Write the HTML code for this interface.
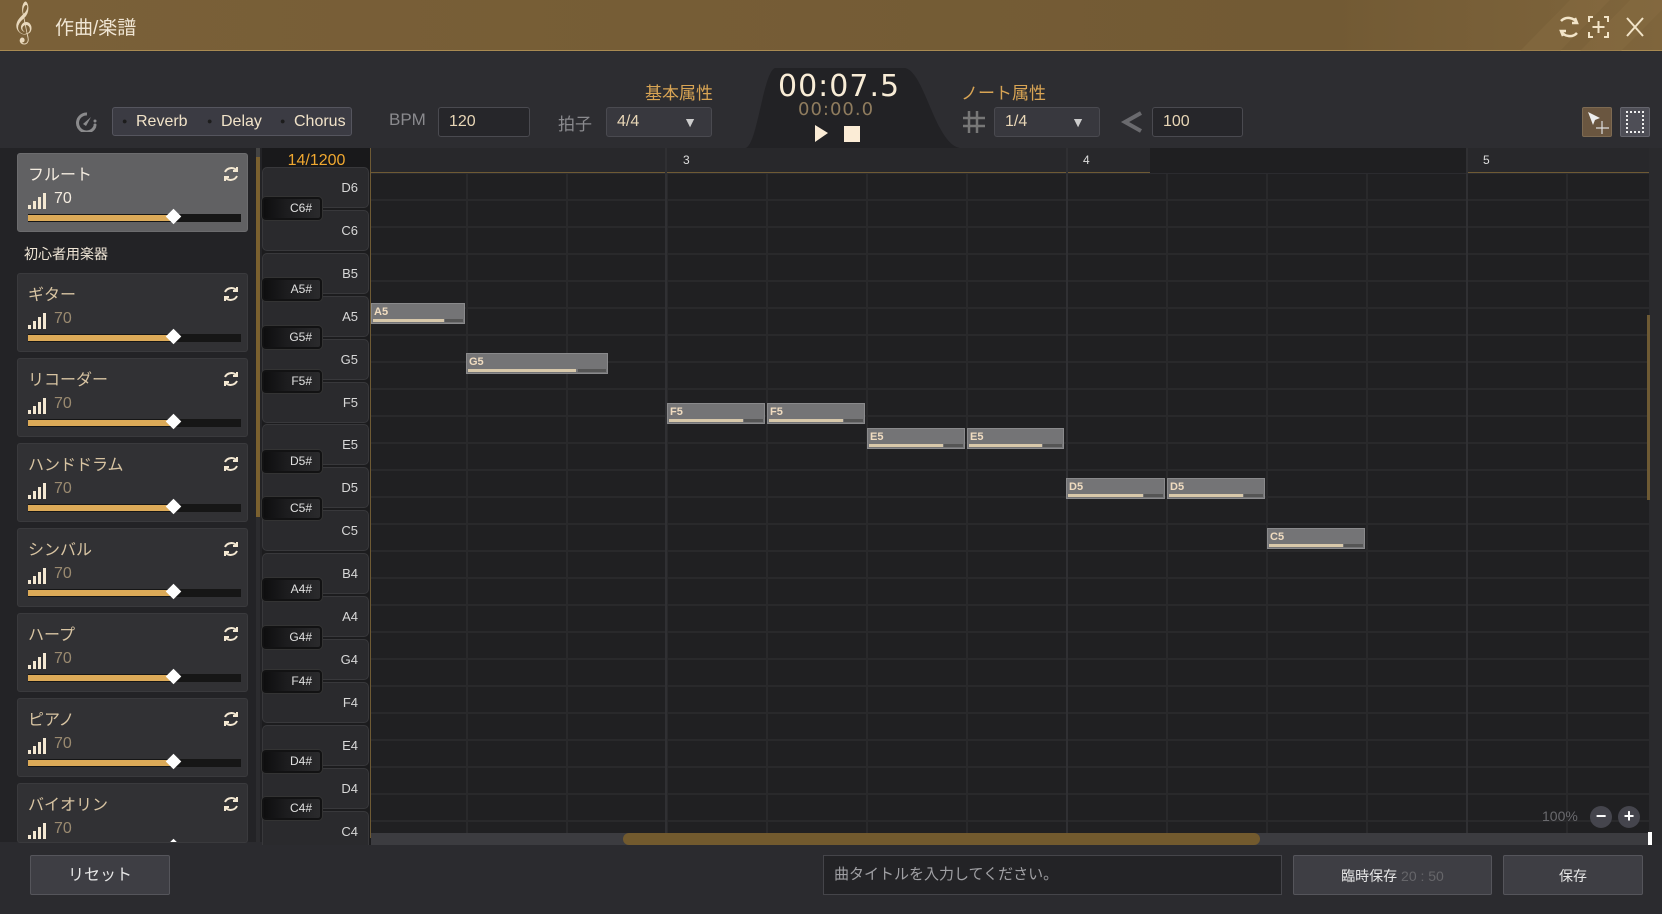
<!DOCTYPE html>
<html><head><meta charset="utf-8">
<style>
*{box-sizing:border-box;margin:0;padding:0}
body{width:1662px;height:914px;overflow:hidden;background:#2b2b2f;font-family:"Liberation Sans","Noto Sans CJK JP",sans-serif;position:relative;color:#e8dcc6}
.a{position:absolute}
.title{left:0;top:0;width:1662px;height:51px;background:linear-gradient(90deg,#7a6038,#725a34 80%,#7f653c);border-bottom:1px solid #a88a52}
.tb{left:0;top:52px;width:1662px;height:96px;background:#2d2d31}
.box{border:1px solid #4a4a50;border-radius:3px;background:#26262a;color:#e8d6b6;font-size:16px;line-height:28px;padding-left:10px}
.lbl{color:#8a8a8e;font-size:17px}
.card{left:17px;width:231px;height:79px;background:#313134;border-radius:3px;border:1px solid #3a3a3d}
.card .n{position:absolute;left:10px;top:7px;font-size:16px;color:#d8c4a2}
.card .v{position:absolute;left:36px;top:36px;font-size:16px;color:#9a8a70}
.card .bars{position:absolute;left:10px;top:39px}
.card .tr{position:absolute;left:10px;top:60px;width:213px;height:8px;background:#161616}
.card .fi{position:absolute;left:0;top:1px;height:6px;width:145px;background:#dcaa58}
.card .th{position:absolute;left:140px;top:-3px;width:11px;height:11px;background:#fff;transform:rotate(45deg)}
.card .rf{position:absolute;right:6px;top:10px}
.wk{left:262px;width:107px;height:41px;background:#2a2a2d;border:1px solid #38383b;border-radius:5px;text-align:right;padding-right:10px;font-size:13px;color:#d8d8d8;line-height:39px}
.bk{left:262px;width:60px;height:23px;background:linear-gradient(90deg,#0e0e0f,#1c1c1e 40%,#2a2a2c);border:2px solid #121213;border-radius:4px;text-align:right;padding-right:8px;font-size:12px;color:#e0e0e0;line-height:19px;box-shadow:0 0 0 1px #333}
.note{height:21px;background:#747476;border:1px solid #8a8a8c;font-size:11px;font-weight:bold;color:#f0dcc0;padding-left:2px;line-height:16px}
.note i{position:absolute;left:1px;bottom:1px;height:3px;background:#d8c8aa;width:77%}
.note b{position:absolute;right:1px;bottom:1px;height:3px;background:#555;width:20%}
.btn{background:#3e3e44;border:1px solid #55555b;border-radius:2px;text-align:center;font-size:16px;color:#e6e6e6;line-height:40px}
</style></head><body>
<div class="a title"></div>
<svg class="a" style="left:1480px;top:0" width="182" height="51"><polygon points="40,51 90,0 130,0 80,51" fill="#8a6f44" opacity=".4"/><polygon points="100,51 150,0 182,0 182,10 141,51" fill="#8a6f44" opacity=".4"/></svg>
<div class="a" style="left:12px;top:2px;font-size:36px;color:#e8d8bc;font-family:'DejaVu Sans'">𝄞</div>
<div class="a" style="left:55px;top:13px;font-size:19px;color:#f0e6d4">作曲/楽譜</div>
<svg class="a" style="left:1554px;top:13px" width="100" height="28" fill="none" stroke="#f2e4c8" stroke-width="2.5"><path d="M7 8a10 10 0 0 1 16 2M23 20a10 10 0 0 1-16-2"/><path d="M21 5l2 5-5 0M9 23l-2-5 5 0"/><path d="M39 4h-4v5M50 4h4v5M39 24h-4v-5M50 24h4v-5M44.5 8v12M38.5 14h12" stroke-width="2"/><path d="M73 5l16 18M89 5l-16 18" stroke-width="2"/></svg>

<div class="a tb"></div>
<svg class="a" style="left:745px;top:68px" width="230" height="80"><path d="M0 80 C12 80 18 4 30 0 H160 C180 4 190 76 215 80 Z" fill="#222225"/></svg>
<svg class="a" style="left:76px;top:112px" width="22" height="20"><path d="M11 2a9 9 0 1 0 8 12" stroke="#8a8a8c" stroke-width="3" fill="none"/><path d="M7 12l8-7-5 9z" fill="#8a8a8c"/><circle cx="19" cy="9" r="1.5" fill="#8a8a8c"/><circle cx="19" cy="13" r="1.5" fill="#8a8a8c"/></svg>
<div class="a" style="left:112px;top:107px;width:240px;height:29px;background:#3b3b43;border:1px solid #55555e;border-radius:3px;font-size:16px;line-height:27px;color:#f0e2c8">
<span style="position:absolute;left:9px;top:0;font-size:9px;color:#1c1c1c">●</span><span style="position:absolute;left:23px">Reverb</span>
<span style="position:absolute;left:94px;font-size:9px;color:#1c1c1c">●</span><span style="position:absolute;left:108px">Delay</span>
<span style="position:absolute;left:167px;font-size:9px;color:#1c1c1c">●</span><span style="position:absolute;left:181px">Chorus</span></div>
<div class="a lbl" style="left:389px;top:110px">BPM</div>
<div class="a box" style="left:438px;top:107px;width:92px;height:30px">120</div>
<div class="a lbl" style="left:558px;top:110px">拍子</div>
<div class="a box" style="left:606px;top:107px;width:106px;height:30px;background:#38383e">4/4<span style="position:absolute;right:14px;top:0;color:#ccc;font-size:14px">▼</span></div>
<div class="a" style="left:645px;top:79px;font-size:17px;color:#d8a454">基本属性</div>
<div class="a" style="left:778px;top:69px;font-size:30px;color:#f8ecd6;letter-spacing:1px;font-family:'DejaVu Sans'">00:07.5</div>
<div class="a" style="left:798px;top:99px;font-size:18px;color:#8f7c5e;letter-spacing:1px;font-family:'DejaVu Sans'">00:00.0</div>
<svg class="a" style="left:814px;top:124px" width="50" height="20"><path d="M1 1l13 8-13 9z" fill="#fbecd6"/><rect x="30" y="2" width="16" height="16" fill="#fbecd6"/></svg>
<div class="a" style="left:961px;top:79px;font-size:17px;color:#d8a454">ノート属性</div>
<svg class="a" style="left:962px;top:110px" width="24" height="24" stroke="#777" stroke-width="2.5"><path d="M7 1v22M15 1v22M1 8h22M1 16h22"/></svg>
<div class="a box" style="left:994px;top:107px;width:106px;height:30px;background:#38383e">1/4<span style="position:absolute;right:14px;top:0;color:#ccc;font-size:14px">▼</span></div>
<svg class="a" style="left:1120px;top:110px" width="24" height="24"><path d="M21 3L5 12l16 9" stroke="#6a6a6e" stroke-width="4" fill="none"/></svg>
<div class="a box" style="left:1152px;top:107px;width:91px;height:30px">100</div>
<div class="a" style="left:1582px;top:107px;width:30px;height:30px;background:#6a5640;border:1px solid #7d6a52;border-radius:2px"></div>
<svg class="a" style="left:1582px;top:107px" width="30" height="30"><path d="M6 5l12 6-5 2-2 5z" fill="#eee"/><path d="M20 14v13M14 21h13" stroke="#ddd" stroke-width="1.2"/></svg>
<div class="a" style="left:1620px;top:107px;width:30px;height:30px;background:#4e4e56;border:1px solid #65656d;border-radius:2px"></div>
<div class="a" style="left:1626px;top:111px;width:18px;height:22px;border:2px dotted #eee"></div>

<!-- left panel -->
<div class="a" style="left:0;top:148px;width:262px;height:694px;background:#232326"></div>
<div class="a" style="left:256px;top:157px;width:4px;height:360px;background:#7a602f"></div>
<div class="a" style="left:256px;top:148px;width:4px;height:9px;background:#444"></div>
<div class="a" style="left:256px;top:517px;width:4px;height:325px;background:#2c2c2f"></div>
<div class="a" style="left:24px;top:244px;font-size:14px;color:#f0e6d6">初心者用楽器</div>
<div id="cards"></div>

<!-- grid -->
<div class="a" style="left:262px;top:148px;width:109px;height:25px;background:#19191b;color:#f0a830;font-size:16px;text-align:center;line-height:25px">14/1200</div>
<div class="a" style="left:371px;top:148px;width:1278px;height:25px;background:#28282b;border-bottom:1px solid #6e5a34"></div>
<div class="a" style="left:1150px;top:148px;width:316px;height:25px;background:#1f1f21"></div>
<div class="a" style="left:262px;top:173px;width:109px;height:672px;background:#1c1c1e"></div>
<div class="a" style="left:371px;top:174px;width:1278px;height:659px;background-color:#202022;background-image:repeating-linear-gradient(90deg,transparent 0 95px,#29292b 95px 97px,transparent 97px 100px),repeating-linear-gradient(180deg,transparent 0 25px,#29292b 25px 27px);background-position:0 0,0 0"></div>
<div class="a" style="left:370px;top:148px;width:1px;height:690px;background:#6e5a34"></div>
<div class="a" style="left:665px;top:148px;width:2px;height:690px;background:#303033"></div>
<div class="a" style="left:1066px;top:148px;width:2px;height:690px;background:#303033"></div>
<div class="a" style="left:1466px;top:148px;width:2px;height:690px;background:#303033"></div>
<div class="a" style="left:683px;top:153px;font-size:12px;color:#ddd">3</div>
<div class="a" style="left:1083px;top:153px;font-size:12px;color:#ddd">4</div>
<div class="a" style="left:1483px;top:153px;font-size:12px;color:#ddd">5</div>
<div class="a" style="left:1649px;top:148px;width:13px;height:700px;background:#2a2a2d"></div>
<div class="a" style="left:1647px;top:315px;width:3px;height:185px;background:#6e5a34"></div>
<div id="keys"></div>
<div id="notes"></div>
<div class="a" style="left:1542px;top:808px;font-size:14px;color:#6a6a6e">100%</div>
<div class="a" style="left:1590px;top:806px;width:22px;height:22px;border-radius:50%;background:#45454d;color:#fff;text-align:center;line-height:20px;font-size:18px;font-weight:bold">−</div>
<div class="a" style="left:1618px;top:806px;width:22px;height:22px;border-radius:50%;background:#45454d;color:#fff;text-align:center;line-height:20px;font-size:18px;font-weight:bold">+</div>
<div class="a" style="left:371px;top:833px;width:1278px;height:12px;background:#3c3c40"></div>
<div class="a" style="left:623px;top:833px;width:637px;height:12px;background:#725a2e;border-radius:6px"></div>
<div class="a" style="left:1648px;top:832px;width:4px;height:14px;background:#fff"></div>

<!-- bottom -->
<div class="a" style="left:0;top:845px;width:1662px;height:69px;background:#2b2b2f"></div>
<div class="a btn" style="left:30px;top:855px;width:140px;height:40px">リセット</div>
<div class="a" style="left:823px;top:855px;width:459px;height:40px;background:#232326;border:1px solid #45454a;font-size:15px;color:#a0a0a4;line-height:38px;padding-left:10px">曲タイトルを入力してください。</div>
<div class="a btn" style="left:1293px;top:855px;width:199px;height:40px;font-size:14px">臨時保存 <span style="color:#66666a">20 : 50</span></div>
<div class="a btn" style="left:1503px;top:855px;width:140px;height:40px;font-size:14px">保存</div>

<script>
var names=["フルート","ギター","リコーダー","ハンドドラム","シンバル","ハープ","ピアノ","バイオリン"];
var tops=[153,273,358,443,528,613,698,783];
var h="";
var rf='<svg class="rf" width="20" height="20" fill="none" stroke="#f4e8d2" stroke-width="2"><path d="M4 8a7 7 0 0 1 12-1M16 12a7 7 0 0 1-12 1"/><path d="M16 3v4h-4M4 17v-4h4"/></svg>';
var bars='<svg class="bars" width="18" height="16" fill="#f4e8d2"><rect x="0" y="12" width="3" height="4"/><rect x="5" y="8" width="3" height="8"/><rect x="10" y="4" width="3" height="12"/><rect x="15" y="0" width="3" height="16"/></svg>';
for(var i=0;i<8;i++){
 var sel=i==0;
 var ht=i==7?60:79;
 h+='<div class="a card" style="top:'+tops[i]+'px;height:'+ht+'px;overflow:hidden;'+(sel?'background:#616163;border-color:#6c6c6e':'')+'"><div class="n" style="'+(sel?'color:#f4ece0':'')+'">'+names[i]+'</div>'+rf+bars+'<div class="v" style="'+(sel?'color:#f4ece0':'')+'">70</div><div class="tr"><div class="fi"></div><div class="th"></div></div></div>';
}
document.getElementById("cards").innerHTML=h;
var wl=["D6","C6","B5","A5","G5","F5","E5","D5","C5","B4","A4","G4","F4","E4","D4","C4"];
var k="";
for(var i=0;i<wl.length;i++){var c=187+42.9*i;k+='<div class="a wk" style="top:'+(c-20)+'px">'+wl[i]+'</div>';}
var bl=[["C6#",208],["A5#",289],["G5#",337],["F5#",381],["D5#",461],["C5#",508],["A4#",589],["G4#",637],["F4#",681],["D4#",761],["C4#",808]];
for(var i=0;i<bl.length;i++){k+='<div class="a bk" style="top:'+(bl[i][1]-11)+'px">'+bl[i][0]+'</div>';}
document.getElementById("keys").innerHTML=k;
var ns=[["A5",371,465,5],["G5",466,608,7],["F5",667,765,9],["F5",767,865,9],["E5",867,965,10],["E5",967,1064,10],["D5",1066,1165,12],["D5",1167,1265,12],["C5",1267,1365,14]];
var n="";
for(var i=0;i<ns.length;i++){n+='<div class="a note" style="left:'+ns[i][1]+'px;top:'+(303+25*(ns[i][3]-5))+'px;width:'+(ns[i][2]-ns[i][1])+'px">'+ns[i][0]+'<i></i><b></b></div>';}
document.getElementById("notes").innerHTML=n;
</script>
</body></html>
